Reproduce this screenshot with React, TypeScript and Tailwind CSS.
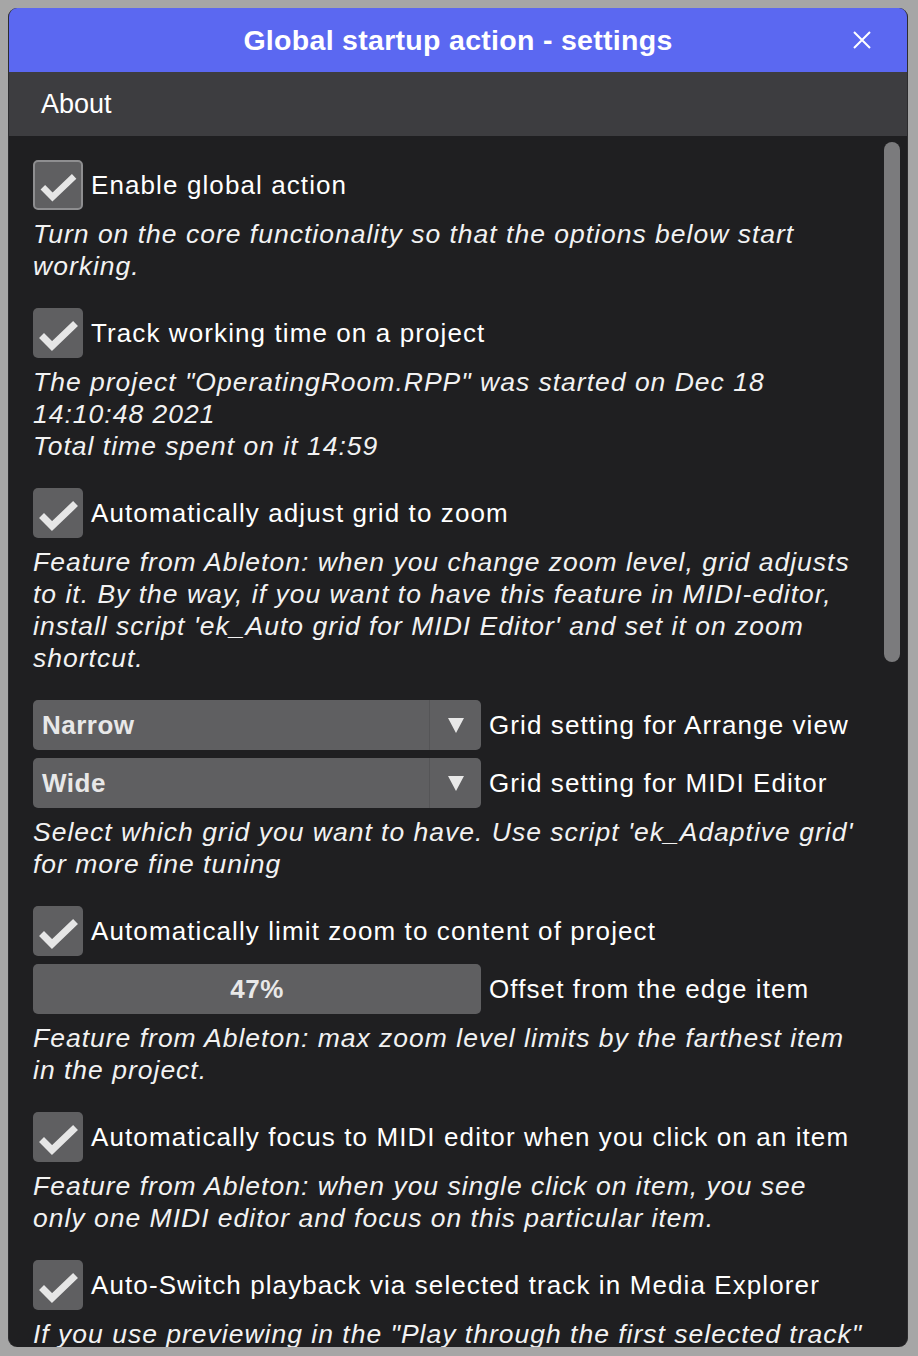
import React from 'react';

const FONT = { fontFamily: '"Liberation Sans", Arial, sans-serif' };

function CheckMark() {
  return (
    <svg viewBox="0 0 50 50" className="w-[50px] h-[50px]">
      <polyline points="11,30 19,38 40,18" fill="none" stroke="#e6e6e6" strokeWidth="7" strokeLinecap="square" strokeLinejoin="miter" />
    </svg>
  );
}

function Checkbox({ label, focused }: { label: string; focused?: boolean }) {
  return (
    <div className="flex items-center gap-2 h-[50px]">
      <div
        className={
          focused
            ? 'w-[50px] h-[50px] rounded-[5px] bg-[#5f5f61] border-2 border-[#8e8e90] flex items-center justify-center overflow-hidden'
            : 'w-[50px] h-[50px] rounded-[5px] bg-[#5f5f61] flex items-center justify-center overflow-hidden'
        }
      >
        <CheckMark />
      </div>
      <span className="text-[26px] tracking-[1.1px] text-white whitespace-nowrap">{label}</span>
    </div>
  );
}

function Desc({ lines }: { lines: string[] }) {
  return (
    <div className="mt-2 italic text-[26.5px] tracking-[1px] leading-[32px] text-[#f2f2f2]">
      {lines.map((l) => (
        <div key={l} className="whitespace-nowrap">{l}</div>
      ))}
    </div>
  );
}

function Combo({ value, label }: { value: string; label: string }) {
  return (
    <div className="flex items-center gap-2 h-[50px]">
      <div className="w-[448px] h-[50px] rounded-[5px] bg-[#5f5f61] flex">
        <div className="flex-1 flex items-center pl-[9px] font-bold text-[26px] tracking-[0.5px] text-[#e8e8e8]">{value}</div>
        <div className="w-[52px] border-l border-[#555557] flex items-center justify-center">
          <svg viewBox="0 0 16 16" className="w-4 h-4">
            <polygon points="0,1 16,1 8,16" fill="#e8e8e8" />
          </svg>
        </div>
      </div>
      <span className="text-[26px] tracking-[1.1px] text-white whitespace-nowrap">{label}</span>
    </div>
  );
}

function Section({ children, first }: { children: React.ReactNode; first?: boolean }) {
  return <div className={first ? '' : 'mt-[26px]'}>{children}</div>;
}

export default function App() {
  return (
    <div className="w-[918px] h-[1356px] bg-[#a6a6a6] p-2 overflow-hidden" style={FONT}>
      <div className="w-[900px] h-[1339px] rounded-[9px] overflow-hidden flex flex-col bg-[#1f1f21] border-l border-r border-[#2c2c2e]">
        {/* Title bar */}
        <div className="h-16 shrink-0 bg-[#5b68f1] grid grid-cols-[1fr_auto_1fr] items-center">
          <div />
          <div className="text-white font-bold text-[28.5px] tracking-[0.3px]">Global startup action - settings</div>
          <div className="flex justify-end pr-[36px]">
            <svg viewBox="0 0 18 18" className="w-[18px] h-[18px]">
              <path d="M1 1 L17 17 M17 1 L1 17" stroke="#ffffff" strokeWidth="2" fill="none" />
            </svg>
          </div>
        </div>

        {/* Tab bar */}
        <div className="h-16 shrink-0 bg-[#3d3d40] flex items-center pl-8">
          <span className="text-white text-[27px]">About</span>
        </div>

        {/* Content */}
        <div className="flex-1 flex min-h-0">
          <div className="flex-1 pl-6 pt-6 overflow-hidden">
            <Section first>
              <Checkbox label="Enable global action" focused />
              <Desc lines={['Turn on the core functionality so that the options below start', 'working.']} />
            </Section>

            <Section>
              <Checkbox label="Track working time on a project" />
              <Desc
                lines={[
                  'The project "OperatingRoom.RPP" was started on Dec 18',
                  '14:10:48 2021',
                  'Total time spent on it 14:59',
                ]}
              />
            </Section>

            <Section>
              <Checkbox label="Automatically adjust grid to zoom" />
              <Desc
                lines={[
                  'Feature from Ableton: when you change zoom level, grid adjusts',
                  'to it. By the way, if you want to have this feature in MIDI-editor,',
                  "install script 'ek_Auto grid for MIDI Editor' and set it on zoom",
                  'shortcut.',
                ]}
              />
            </Section>

            <Section>
              <Combo value="Narrow" label="Grid setting for Arrange view" />
              <div className="mt-2">
                <Combo value="Wide" label="Grid setting for MIDI Editor" />
              </div>
              <Desc lines={["Select which grid you want to have. Use script 'ek_Adaptive grid'", 'for more fine tuning']} />
            </Section>

            <Section>
              <Checkbox label="Automatically limit zoom to content of project" />
              <div className="mt-2 flex items-center gap-2 h-[50px]">
                <div className="w-[448px] h-[50px] rounded-[5px] bg-[#5f5f61] flex items-center justify-center font-bold text-[26px] tracking-[0.5px] text-[#e8e8e8]">
                  47%
                </div>
                <span className="text-[26px] tracking-[1.1px] text-white whitespace-nowrap">Offset from the edge item</span>
              </div>
              <Desc lines={['Feature from Ableton: max zoom level limits by the farthest item', 'in the project.']} />
            </Section>

            <Section>
              <Checkbox label="Automatically focus to MIDI editor when you click on an item" />
              <Desc
                lines={[
                  'Feature from Ableton: when you single click on item, you see',
                  'only one MIDI editor and focus on this particular item.',
                ]}
              />
            </Section>

            <Section>
              <Checkbox label="Auto-Switch playback via selected track in Media Explorer" />
              <Desc lines={['If you use previewing in the "Play through the first selected track"']} />
            </Section>
          </div>

          {/* Scrollbar */}
          <div className="w-[23px] shrink-0 pt-[6px]">
            <div className="w-4 h-[520px] rounded-full bg-[#7b7b7d]" />
          </div>
        </div>
      </div>
    </div>
  );
}
